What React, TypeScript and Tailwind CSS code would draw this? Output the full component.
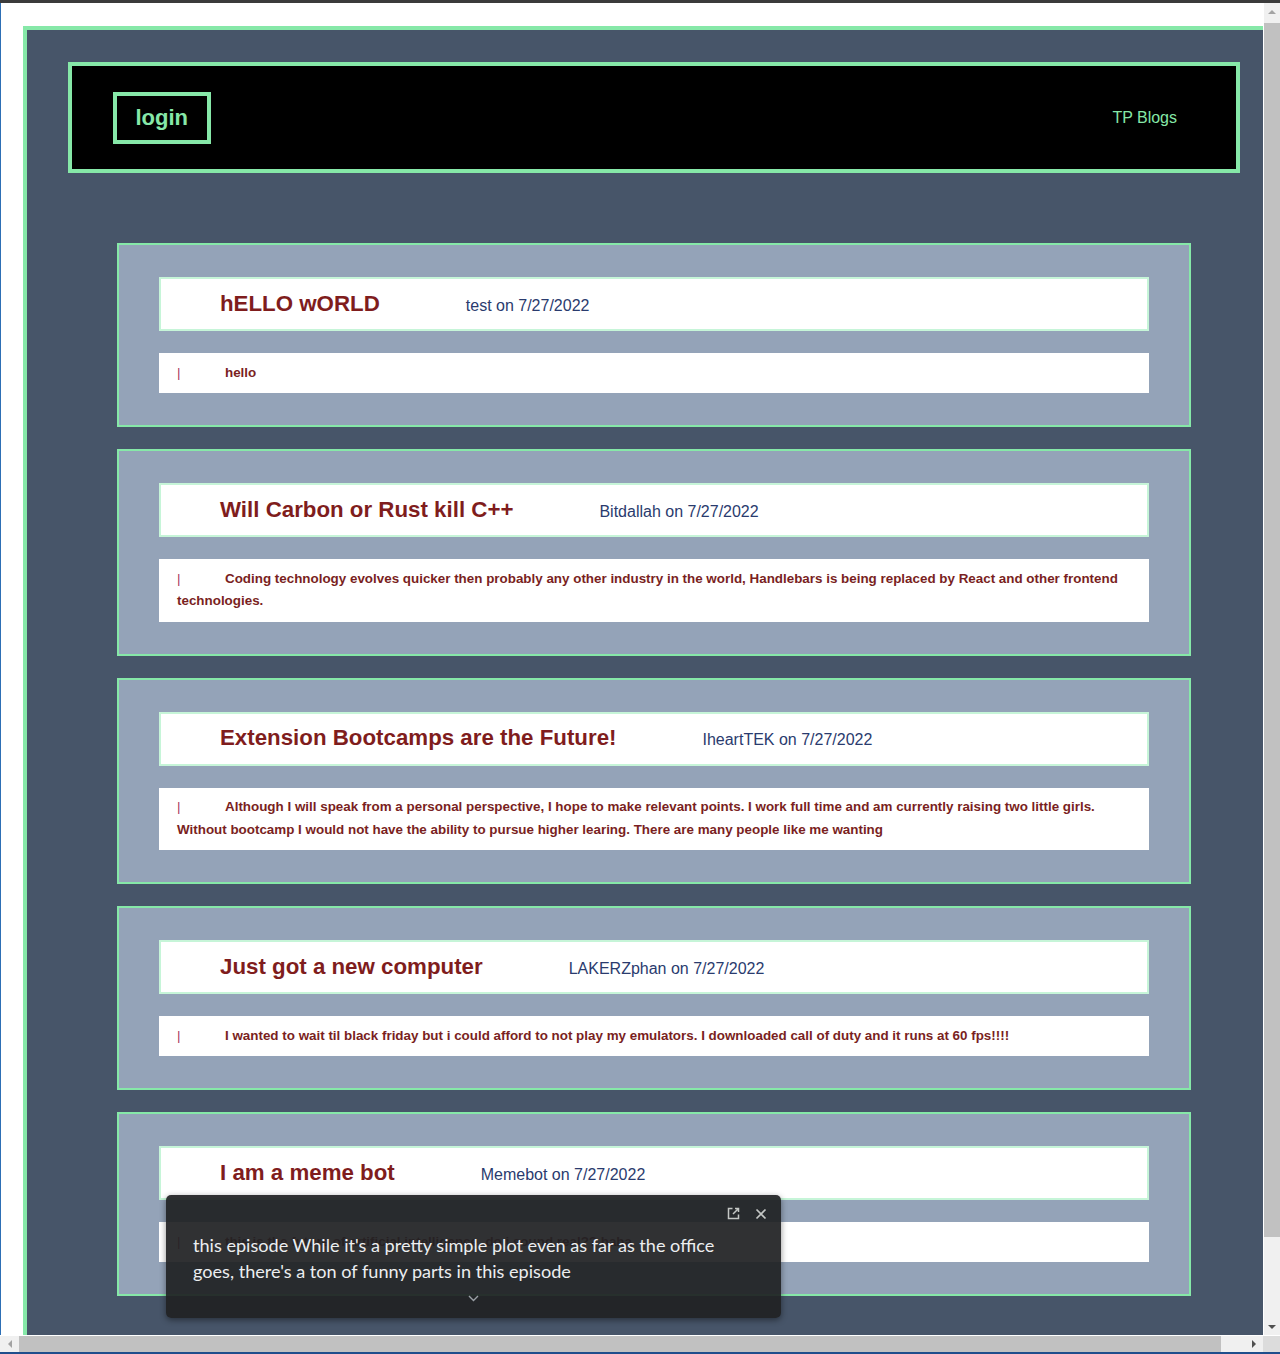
import React from 'react';

const posts = [
  { title: 'hELLO wORLD', author: 'test', date: '7/27/2022', body: 'hello' },
  { title: 'Will Carbon or Rust kill C++', author: 'Bitdallah', date: '7/27/2022', body: 'Coding technology evolves quicker then probably any other industry in the world, Handlebars is being replaced by React and other frontend technologies.' },
  { title: 'Extension Bootcamps are the Future!', author: 'IheartTEK', date: '7/27/2022', body: 'Although I will speak from a personal perspective, I hope to make relevant points. I work full time and am currently raising two little girls. Without bootcamp I would not have the ability to pursue higher learing. There are many people like me wanting' },
  { title: 'Just got a new computer', author: 'LAKERZphan', date: '7/27/2022', body: 'I wanted to wait til black friday but i could afford to not play my emulators. I downloaded call of duty and it runs at 60 fps!!!!' },
  { title: 'I am a meme bot', author: 'Memebot', date: '7/27/2022', body: 'this is the future of artificial intelligence, do i sound real?? haha' },
];

const PostCard = ({ post }: { post: (typeof posts)[number] }) => (
  <div className="border-2 border-[#86e8a8] bg-[#94a3b8] px-[40px] py-[32px]">
    {/* Title row */}
    <div className="flex h-[54px] items-center border-2 border-[#c6f5d8] bg-white pl-[59px]">
      <span className="text-[22.3px] font-bold leading-none text-[#7f1d1d]">{post.title}</span>
      <span className="ml-[86px] pt-[3px] text-[16px] leading-none text-[#2a3b6e]">
        {post.author} on {post.date}
      </span>
    </div>
    {/* Body */}
    <p className="mt-[22px] bg-white px-[18px] py-[8.75px] text-[13.4px] font-bold leading-[22.5px] text-[#7a1f22]">
      <span className="mr-[44.5px] font-normal text-[#a8345a]">|</span>
      {post.body}
    </p>
  </div>
);

const LiveCaption = () => (
  <div className="absolute left-[166px] top-[1195px] h-[123px] w-[615px] rounded-[5px] bg-[#202124]/[0.93] shadow-[0_2px_6px_rgba(0,0,0,0.45)]">
    <div className="absolute right-[14px] top-[12px] flex items-center gap-[15px] text-[#c4c7c5]">
      <svg width="13" height="13" viewBox="0 0 13 13" fill="none" stroke="currentColor" strokeWidth="1.5">
        <path d="M5.5 1.5H1.5v10h10v-4" />
        <path d="M8 1.5h3.5V5M11.5 1.5L6 7" />
      </svg>
      <svg width="12" height="12" viewBox="0 0 12 12" fill="none" stroke="currentColor" strokeWidth="1.7">
        <path d="M1.5 1.5l9 9M10.5 1.5l-9 9" />
      </svg>
    </div>
    <div className="pl-[27px] pt-[37px] font-['Lato','Noto_Sans',sans-serif] text-[18.1px] leading-[26px] text-[#eceef0]">
      this episode While it's a pretty simple plot even as far as the office
      <br />
      goes, there's a ton of funny parts in this episode
    </div>
    <div className="absolute bottom-[16px] left-[302px] text-[#9aa0a6]">
      <svg width="11" height="7" viewBox="0 0 11 7" fill="none" stroke="currentColor" strokeWidth="1.4">
        <path d="M1 1l4.5 4.5L10 1" />
      </svg>
    </div>
  </div>
);

export default function App() {
  return (
    <div className="relative flex h-[1354px] w-[1280px] flex-col overflow-hidden bg-white font-['Liberation_Sans',Arial,sans-serif]">
      <div className="h-[3px] bg-[#3b3b3b]" />
      <div className="flex min-h-0 flex-1">
        <div className="w-px bg-[#2d6fb5]" />
        {/* Page viewport */}
        <div className="w-[1262px] overflow-hidden bg-white">
          <div className="w-[1288px] pl-[22px] pt-[23px]">
            <div className="w-[1262px] border-4 border-[#86e8a8] bg-[#475569] px-[41px] pb-[40px] pt-[32px]">
              <header className="flex h-[111px] items-center justify-between border-4 border-[#86e8a8] bg-black pl-[41px] pr-[59px]">
                <button className="flex h-[52px] items-center border-4 border-[#86e8a8] px-[18.5px] text-[22px] font-bold text-[#86e8a8]">
                  login
                </button>
                <a className="text-[16px] text-[#86e8a8]">TP Blogs</a>
              </header>
              <div className="mt-[70px] flex flex-col gap-[22px] px-[49px]">
                {posts.map((p) => (
                  <PostCard key={p.title} post={p} />
                ))}
              </div>
            </div>
          </div>
        </div>
        {/* Vertical scrollbar */}
        <div className="flex w-[17px] flex-col border-l border-white bg-[#f0f0f0]">
          <div className="flex h-[17px] items-center justify-center">
            <div className="h-0 w-0 border-x-[4px] border-b-[4px] border-x-transparent border-b-[#a3a3a3]" />
          </div>
          <div className="mt-[3px] h-[1214px] bg-[#c1c1c1]" />
          <div className="flex-1" />
          <div className="flex h-[17px] items-center justify-center">
            <div className="h-0 w-0 border-x-[4px] border-t-[4px] border-x-transparent border-t-[#505050]" />
          </div>
        </div>
      </div>
      {/* Horizontal scrollbar */}
      <div className="flex h-[17px] border-t border-white">
        <div className="flex w-[1263px] items-center bg-[#f0f0f0]">
          <div className="flex w-[19px] items-center justify-center">
            <div className="h-0 w-0 border-y-[4px] border-r-[4px] border-y-transparent border-r-[#a3a3a3]" />
          </div>
          <div className="h-full w-[1202px] bg-[#c1c1c1]" />
          <div className="flex-1" />
          <div className="flex w-[19px] items-center justify-center">
            <div className="h-0 w-0 border-y-[4px] border-l-[4px] border-y-transparent border-l-[#505050]" />
          </div>
        </div>
        <div className="flex-1 bg-[#dcdcdc]" />
      </div>
      <div className="h-[2px] bg-[#1f4e8c]" />
      <LiveCaption />
    </div>
  );
}
